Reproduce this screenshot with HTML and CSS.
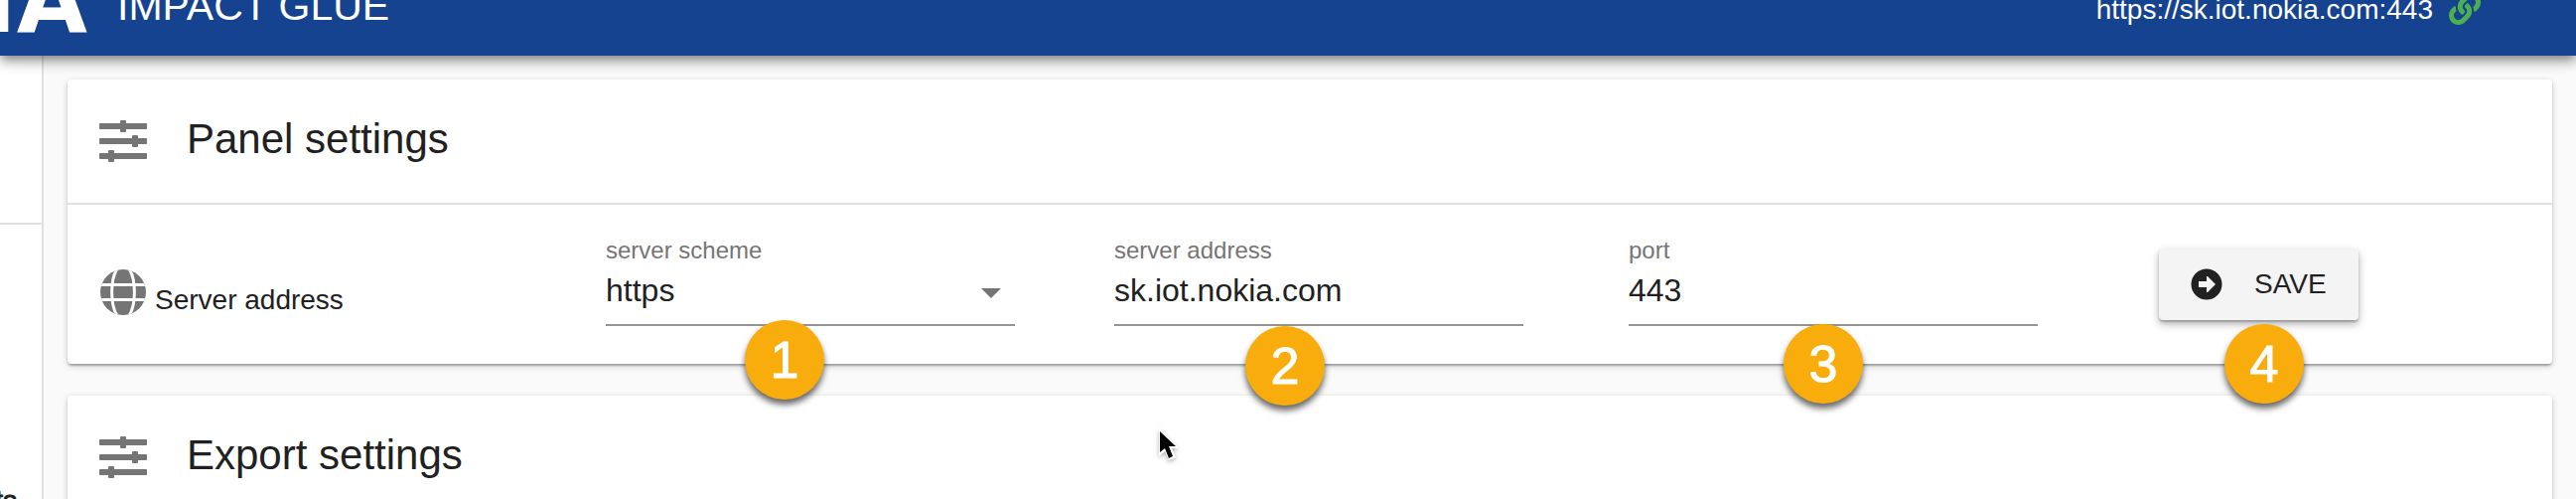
FILE: index.html
```html
<!DOCTYPE html>
<html lang="en">
<head>
<meta charset="utf-8">
<title>Impact Glue - Settings</title>
<link rel="stylesheet" href="styles.css">
</head>
<body>
<svg class="sprite" aria-hidden="true">
  <symbol id="tune" viewBox="0 0 48 48">
    <rect y="8" width="48" height="6" rx="1"/><rect x="21" y="5" width="6" height="12" rx="1"/>
    <rect y="23" width="48" height="6" rx="1"/><rect x="33" y="20" width="6" height="12" rx="1"/>
    <rect y="38" width="48" height="6" rx="1"/><rect x="9" y="35" width="6" height="12" rx="1"/>
  </symbol>
</svg>
<header class="toolbar">
  <div class="logo">NOKIA</div>
  <div class="product">IMPACT GLUE</div>
  <div class="connection">
    <span>https://sk.iot.nokia.com:443</span>
    <svg class="link-icon" viewBox="0 0 512 512" aria-hidden="true"><path d="M326.612 185.391c59.747 59.809 58.927 155.698.36 214.59-.11.12-.24.25-.36.37l-67.2 67.2c-59.27 59.27-155.699 59.262-214.96 0-59.27-59.26-59.27-155.7 0-214.96l37.106-37.106c9.84-9.84 26.786-3.3 27.294 10.606.648 17.722 3.826 35.527 9.69 52.721 1.986 5.822.567 12.262-3.783 16.612l-13.087 13.087c-28.026 28.026-28.905 73.66-1.155 101.96 28.024 28.579 74.086 28.749 102.325.51l67.2-67.19c28.191-28.191 28.073-73.757 0-101.83-3.701-3.694-7.429-6.564-10.341-8.569a16.037 16.037 0 0 1-6.947-12.606c-.396-10.567 3.348-21.456 11.698-29.806l21.054-21.055c5.521-5.521 14.182-6.199 20.584-1.731a152.482 152.482 0 0 1 20.522 17.197zM467.547 44.449c-59.261-59.262-155.69-59.27-214.96 0l-67.2 67.2c-.12.12-.25.25-.36.37-58.566 58.892-59.387 154.781.36 214.59a152.454 152.454 0 0 0 20.521 17.196c6.402 4.468 15.064 3.789 20.584-1.731l21.054-21.055c8.35-8.35 12.094-19.239 11.698-29.806a16.037 16.037 0 0 0-6.947-12.606c-2.912-2.005-6.64-4.875-10.341-8.569-28.073-28.073-28.191-73.639 0-101.83l67.2-67.19c28.239-28.239 74.3-28.069 102.325.51 27.75 28.3 26.872 73.934-1.155 101.96l-13.087 13.087c-4.35 4.35-5.769 10.79-3.783 16.612 5.864 17.194 9.042 34.999 9.69 52.721.509 13.906 17.454 20.446 27.294 10.606l37.106-37.106c59.271-59.259 59.271-155.699.001-214.959z"/></svg>
  </div>
</header>
<div class="layout">
  <nav class="sidebar">
    <div class="sidebar-top"></div>
    <div class="sidebar-item">ts</div>
  </nav>
  <main class="content">
    <section class="card card-front">
      <div class="card-header">
        <svg class="icon" aria-hidden="true"><use href="#tune"/></svg>
        <h2 class="card-title">Panel settings</h2>
      </div>
      <form class="card-body">
        <div class="row-title">
          <svg class="icon" viewBox="0 0 48 48" aria-hidden="true">
            <clipPath id="disc"><circle cx="24" cy="24" r="23"/></clipPath>
            <g clip-path="url(#disc)">
              <rect width="48" height="48"/>
              <g class="globe-lines">
                <path d="M0 16.500H48M0 31.500H48"/>
                <path d="M19 -1C10.500 10 10.500 38 19 49M29 -1C37.500 10 37.500 38 29 49"/>
              </g>
            </g>
          </svg>
          <span>Server address</span>
        </div>
        <div class="field">
          <label for="scheme">server scheme</label>
          <div class="select-wrap">
            <select id="scheme"><option>https</option><option>http</option></select>
            <svg class="caret" viewBox="0 0 20 10" aria-hidden="true"><path d="M0 0H20L10 10Z"/></svg>
          </div>
          <span class="badge badge-1">1</span>
        </div>
        <div class="field">
          <label for="address">server address</label>
          <input id="address" type="text" value="sk.iot.nokia.com">
          <span class="badge badge-2">2</span>
        </div>
        <div class="field">
          <label for="port">port</label>
          <input id="port" type="text" value="443">
          <span class="badge badge-3">3</span>
        </div>
        <div class="action">
          <button class="save" type="button">
            <svg class="save-icon" viewBox="0 0 32 32" aria-hidden="true"><circle cx="16" cy="16" r="15.500"/><path class="arrow" d="M8 13H16V8H17L25 16L17 24H16V19H8Z"/></svg>
            SAVE
          </button>
          <span class="badge badge-4">4</span>
        </div>
      </form>
    </section>
    <section class="card">
      <div class="card-header">
        <svg class="icon" aria-hidden="true"><use href="#tune"/></svg>
        <h2 class="card-title">Export settings</h2>
      </div>
    </section>
  </main>
</div>
<svg class="pointer" viewBox="0 0 24 36" aria-hidden="true"><path d="M3 3V31L9 26L13 35L20 32L16 23H23Z" fill="#fff"/><path d="M4 6V27L9 23L13 33L17 31L13 21L20 21Z"/></svg>
</body>
</html>
```
FILE: styles.css
```css
* { box-sizing: border-box; }

body {
  margin: 0;
  height: 100vh;
  overflow: hidden;
  display: flex;
  flex-direction: column;
  position: relative;
  background: #fafafa;
  color: #212121;
  font: 28px/32px "Liberation Sans", Arial, sans-serif;
}

.sprite { position: absolute; width: 0; height: 0; }

.toolbar {
  position: relative;
  z-index: 2;
  flex: none;
  height: 56px;
  padding: 0 96px 26px 0;
  display: flex;
  align-items: flex-end;
  background: #16438f;
  color: #fff;
  box-shadow: 0 4px 8px -2px rgba(0, 0, 0, .3), 0 8px 10px rgba(0, 0, 0, .18), 0 2px 20px rgba(0, 0, 0, .14);
}

.logo {
  width: 88px;
  margin-right: 30px;
  display: flex;
  justify-content: flex-end;
  font: bold 92px/58px "DejaVu Sans", sans-serif;
}

.product { font-size: 41px; line-height: 48px; }

.connection {
  margin-left: auto;
  display: flex;
  align-items: flex-end;
  gap: 16px;
  line-height: 40px;
}

.link-icon { width: 32px; height: 32px; margin-bottom: 5px; fill: #4caf50; }

.layout { flex: 1; min-height: 0; display: flex; }

.sidebar {
  width: 44px;
  flex: none;
  overflow: hidden;
  background: #fff;
  border-right: 2px solid #e0e0e0;
}

.sidebar-top { height: 170px; border-bottom: 2px solid #e0e0e0; }

.sidebar-item {
  display: flex;
  justify-content: flex-end;
  padding: 262px 25px 0 0;
  -webkit-text-stroke: 1px #212121;
}

.content {
  flex: 1;
  padding: 24px;
  display: flex;
  flex-direction: column;
  gap: 32px;
}

.card {
  flex: none;
  background: #fff;
  border-radius: 4px;
  box-shadow: 0 2px 6px rgba(0, 0, 0, .2), 0 2px 2px rgba(0, 0, 0, .14), 0 4px 2px -2px rgba(0, 0, 0, .12);
}

.card-front { position: relative; z-index: 1; }

.card-header {
  display: flex;
  gap: 40px;
  padding: 36px 32px 40px;
  border-bottom: 2px solid #e0e0e0;
}

.icon { width: 48px; height: 48px; flex: none; fill: #757575; }

.globe-lines { fill: none; stroke: #fff; stroke-width: 3; }

.card-title { margin: 0; font-size: 42px; line-height: 48px; font-weight: 400; }

.card-body {
  display: grid;
  grid-template-columns: 510fr 512fr 518fr 534fr 396fr;
  padding: 30px 0 38px 32px;
}

.row-title {
  display: flex;
  align-items: flex-end;
  gap: 8px;
  padding-bottom: 10px;
}

.field {
  position: relative;
  display: flex;
  flex-direction: column;
  gap: 4px;
  width: 412px;
}

.field label { font-size: 24px; color: #757575; }

.field input,
.field select {
  width: 100%;
  height: 56px;
  margin: 0;
  padding: 0 0 14px;
  border: 0;
  border-bottom: 2px solid #949494;
  border-radius: 0;
  outline: 0;
  appearance: none;
  background: none;
  color: inherit;
  font: inherit;
  font-size: 32px;
  line-height: 40px;
}

.select-wrap { display: grid; }
.select-wrap > * { grid-area: 1 / 1; }

.caret {
  width: 20px;
  height: 10px;
  margin: 18px 14px 0 0;
  justify-self: end;
  fill: #757575;
  pointer-events: none;
}

.action { position: relative; padding-top: 14px; }

.save {
  display: flex;
  align-items: center;
  gap: 32px;
  height: 72px;
  padding: 0 32px;
  border: 0;
  border-radius: 4px;
  background: #f4f4f4;
  color: inherit;
  font: inherit;
  box-shadow: 0 4px 8px rgba(0, 0, 0, .3), 0 2px 2px rgba(0, 0, 0, .2);
}

.save-icon { width: 32px; height: 32px; fill: #212121; }
.arrow { fill: #f4f4f4; }

.badge {
  position: absolute;
  width: 80px;
  height: 80px;
  border-radius: 50%;
  background: #f9ad0c;
  color: #fff;
  font-size: 52px;
  line-height: 80px;
  text-align: center;
  -webkit-text-stroke: 1px #fff;
  box-shadow: 0 5px 6px rgba(0, 0, 0, .6);
}

.badge-1 { left: 140px; top: 86px; }
.badge-2 { left: 132px; top: 92px; }
.badge-3 { left: 156px; top: 90px; }
.badge-4 { left: 66px; top: 90px; }

.pointer {
  position: absolute;
  z-index: 3;
  left: 1164px;
  top: 428px;
  width: 24px;
  height: 36px;
  filter: drop-shadow(0 2px 2px rgba(0, 0, 0, .3));
}
```
